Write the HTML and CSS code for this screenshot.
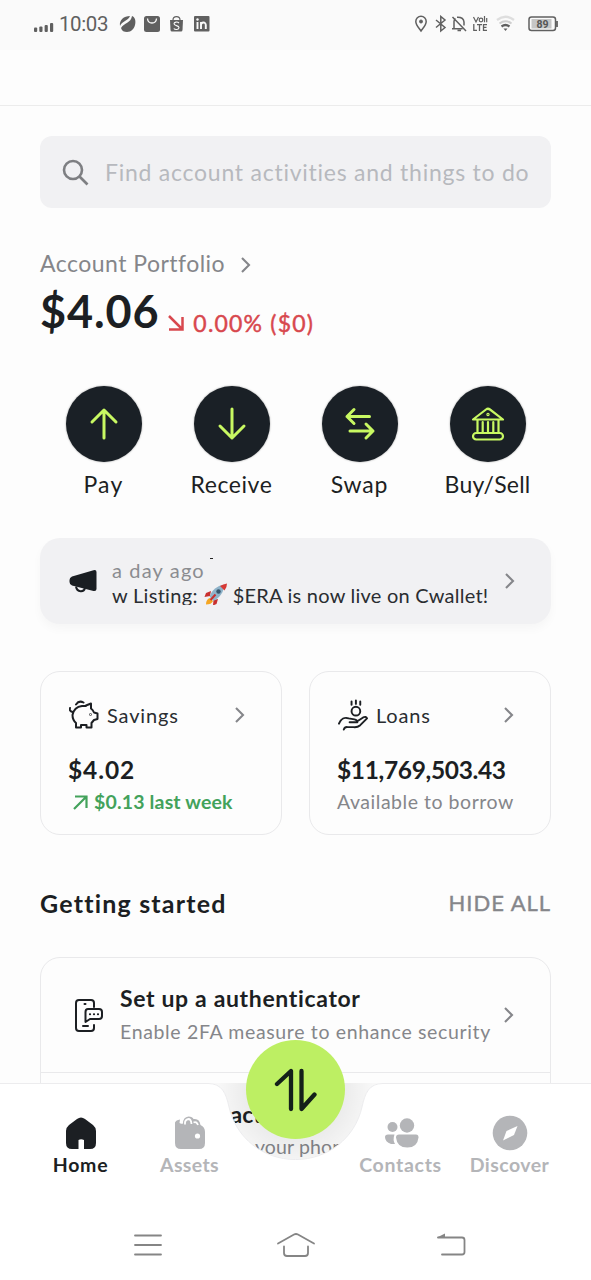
FILE: index.html
```html
<!DOCTYPE html>
<html lang="en">
<head>
<meta charset="utf-8">
<title>Wallet</title>
<link rel="stylesheet" href="styles.css">
</head>
<body>
<div class="phone">
  <header class="status">
    <svg class="status-left" width="20" height="12" viewBox="0 0 20 12" fill="#606060"><rect x="0" y="7.500" width="3.200" height="4.500" rx="1"/><rect x="5.300" y="6.500" width="3.200" height="5.500" rx="1"/><rect x="10.600" y="5" width="3.200" height="7" rx="1"/><rect x="16" y="3" width="3.200" height="9" rx="1"/></svg>
    <span class="clock">10:03</span>
    <svg class="apps" width="92" height="18" viewBox="0 0 92 18" fill="#606060">
      <path d="M1 11C0 5 5 1 11 1C9 6 3 6 1 11ZM2 13C5 8 12 8 13 1C19 3 17 17 8 17C5 17 3 16 2 13Z"/>
      <rect x="25" y="1" width="16" height="16" rx="2.500"/><path d="M28.500 3.500C29 9.500 37 9.500 37.500 3.500" fill="none" stroke="#fafafa" stroke-width="1.300"/>
      <path d="M51 5H64L63.500 15Q63.400 16.500 62 16.500H53Q51.600 16.500 51.500 15Z"/><path d="M54 5C54 .5 61 .5 61 5" fill="none" stroke="#606060" stroke-width="1.200"/><path d="M60 8C58.500 6.500 55 6.800 55 8.800C55 11 60 10.300 60 12.600C60 15 56 15 54.800 13.500" fill="none" stroke="#fafafa" stroke-width="1.100"/>
      <rect x="75" y="1" width="15.500" height="15.500" rx="1"/><path d="M78.500 7V14M82 14V7M82 10C82 7 86.800 6.500 86.800 10V14" fill="none" stroke="#fafafa" stroke-width="1.900"/><circle cx="78.500" cy="4.500" r="1.200" fill="#fafafa"/>
    </svg>
    <svg class="status-right" width="146" height="18" viewBox="0 0 146 18" fill="none" stroke="#606060" stroke-width="1.500">
      <path d="M7 16C4.500 12.500 1.800 10 1.800 6.500A5.200 5.200 0 0 1 12.200 6.500C12.200 10 9.500 12.500 7 16Z"/><circle cx="7" cy="6.500" r="1.500" fill="#606060" stroke-width="1"/>
      <path d="M22 5L31 12.500L26.800 16V1.500L31 5L22 12.500"/>
      <path d="M38.500 2L52 16M38 13.700H48.500M40 13.500V6.500Q40 4.500 41.500 3.500M43 2.300Q49.500 2 50 7V10.500M43.500 15.500H47"/>
      <path d="M59.500 2L62 7L64.500 2M70.500 1V7.300M72.700 3V7.300" stroke-width="1.200"/><circle cx="67" cy="5" r="1.800" stroke-width="1.200"/>
      <path d="M59.800 9V15.300H63M63 9.600H68M65.500 9.600V16M73 9.600H69.500V15.300H73M69.500 12.400H72.500" stroke-width="1.300"/>
      <path d="M83 5Q91.500-1.500 100 5" stroke="#dedede" stroke-width="2.400"/><path d="M85.500 8.500Q91.500 4 97.500 8.500" stroke="#cfcfcf" stroke-width="2"/><path d="M87.500 11.500Q91.500 8.500 95.500 11.500" stroke-width="2.200"/><path d="M89.500 13.500H93.500L91.500 16Z" fill="#606060" stroke="none"/>
      <rect x="115" y="2" width="26.500" height="13.500" rx="2.500"/><path d="M143 6V12" stroke-width="1.800"/><rect x="117.500" y="4" width="20" height="9.500" fill="#c6c6c6" stroke="none"/>
      <text x="128.500" y="12.800" text-anchor="middle" class="battery">89</text>
    </svg>
  </header>
  <div class="topbar"></div>
  <main class="content">
    <div class="search">
      <svg width="28" height="28" viewBox="0 0 28 28" fill="none" stroke="#7e7f82" stroke-width="2.600"><circle cx="11" cy="12" r="9"/><path d="M17.500 18.500L25.500 26.500"/></svg>
      <span class="search-hint">Find account activities and things to do</span>
    </div>
    <section class="portfolio">
      <div class="portfolio-title"><span class="t-port">Account Portfolio</span><svg class="chev" width="11" height="18" viewBox="0 0 11 18"><path d="M2 2L9 9L2 16"/></svg></div>
      <div class="balance">
        <strong class="t-total">$4.06</strong>
        <svg class="down" width="18" height="18" viewBox="0 0 18 18" fill="none" stroke="#d8484e" stroke-width="2.500"><path d="M2 2L15 15M2 15.500H15.500V3"/></svg>
        <span class="t-delta">0.00% ($0)</span>
      </div>
    </section>
    <section class="actions">
      <div class="action"><span class="disc"><svg width="40" height="40" viewBox="0 0 40 40"><path d="M20 34V6M8 18L20 6L32 18"/></svg></span><span class="t-pay">Pay</span></div>
      <div class="action"><span class="disc"><svg width="40" height="40" viewBox="0 0 40 40"><path d="M20 5V34M8 22L20 34L32 22"/></svg></span><span class="t-receive">Receive</span></div>
      <div class="action"><span class="disc"><svg width="40" height="40" viewBox="0 0 40 40"><path d="M29.500 12.500H7M14 5.500L7 12.500L14 19.500M10 27H33M26 20L33 27L26 34"/></svg></span><span class="t-swap">Swap</span></div>
      <div class="action"><span class="disc"><svg class="bank" width="40" height="40" viewBox="0 0 40 40"><path d="M5 15.500L18 5.500Q20 4 22 5.500L35 15.500ZM9.500 16V28M14.700 18V28M20 18V28M25.300 18V28M30.500 16V28"/><rect x="5" y="29" width="30" height="6.500" rx="3.200"/><circle cx="20" cy="10.500" r=".6"/></svg></span><span class="t-buy">Buy/Sell</span></div>
    </section>
    <section class="notice">
      <svg class="horn" width="28" height="24" viewBox="0 0 28 24"><path d="M24.500 1.200Q27.500.5 27.500 3V20Q27.500 22.500 24.500 22L3 16.500Q.5 15.500.5 13V11Q.5 8.500 3 7.500Z" fill="#1a1e22"/><path d="M7 17.500C8 23.500 15 23.500 16 19" fill="none" stroke="#1a1e22" stroke-width="2"/></svg>
      <div class="notice-text">
        <i class="speck"></i>
        <span class="t-ago">a day ago</span>
        <span class="notice-line"><span class="t-list">w Listing:</span><svg class="rocket" width="24" height="23" viewBox="0 0 24 23"><path d="M7 8L2 10L.5 14L6 13Z" fill="#c9302f"/><path d="M14 16L12.500 21L9 22.500L9.500 17Z" fill="#c9302f"/><path d="M2 21.500Q2 16 6 15L9 18Q7.500 21.500 2 21.500Z" fill="#f5a623"/><path d="M5.500 13.500C8 7 13 2.500 20 2C20 9 16 14.500 9.500 18Z" fill="#8fb3c9"/><path d="M16 3Q19 1 23 .5Q23 4.500 20.500 7.500Z" fill="#d63a36"/><circle cx="14.500" cy="8.500" r="2.200" fill="#37566d"/><path d="M6.500 17L11.500 11.500" stroke="#c9302f" stroke-width="2"/></svg><span class="t-era">$ERA is now live on Cwallet!</span></span>
      </div>
      <svg class="chev" width="11" height="18" viewBox="0 0 11 18"><path d="M2 2L9 9L2 16"/></svg>
    </section>
    <section class="cards">
      <article class="card">
        <div class="card-head">
          <svg class="line-icon" width="30" height="30" viewBox="0 0 30 30"><path d="M17 5.500L22 3.500V8.500Q24 10 25 12.500L28.500 13.500V19L25 20L22.500 23V27.500H17.500V25H12V27.500H7V23Q3.500 20 3.500 15Q5 7 13 6H17M1 8Q0 11 3.500 12M7 4.500Q10 0 14.500 2.500"/><circle cx="21.500" cy="14.500" r=".3"/></svg>
          <span class="t-savings">Savings</span><svg class="chev" width="11" height="18" viewBox="0 0 11 18"><path d="M2 2L9 9L2 16"/></svg>
        </div>
        <strong class="amount t-402">$4.02</strong>
        <div class="gain"><svg width="15" height="15" viewBox="0 0 15 15" fill="none" stroke="#43a25b" stroke-width="2.200"><path d="M1 14L13 2M2 1.500H13.500V13"/></svg><span class="t-week">$0.13 last week</span></div>
      </article>
      <article class="card">
        <div class="card-head">
          <svg class="line-icon" width="30" height="33" viewBox="0 0 31 33"><circle cx="18.500" cy="12" r="4.500"/><path d="M14 2V5.500M18.500 1V4.500M23 2V5.500M1 25C3 20 7 18 11 19.500L17 20.500Q20 21 20 23.500H12M20 22.500L26 18.500Q29 17 30 19.500L23 26.500Q20 29 16 28.500H10Q7 28 6 31"/></svg>
          <span class="t-loans">Loans</span><svg class="chev" width="11" height="18" viewBox="0 0 11 18"><path d="M2 2L9 9L2 16"/></svg>
        </div>
        <strong class="amount t-11m">$11,769,503.43</strong>
        <span class="t-avail">Available to borrow</span>
      </article>
    </section>
    <div class="section-head"><h2 class="t-getting">Getting started</h2><span class="t-hide">HIDE ALL</span></div>
    <section class="tasks">
      <div class="task">
        <svg class="line-icon" width="30" height="34" viewBox="0 0 30 34"><path d="M20 9V5Q20 2 17 2H5Q2 2 2 5V30Q2 33 5 33H17Q20 33 20 30V27M10.500 6H11.500M9 28H14"/><path d="M14 11H25Q28 11 28 14V18Q28 21 25 21H16L11.500 24V14Q11.500 11 14 11ZM15.900 16.300H16.100M19.900 16.300H20.100M23.900 16.300H24.100"/></svg>
        <div class="task-text"><strong class="t-auth">Set up a authenticator</strong><span class="t-2fa">Enable 2FA measure to enhance security</span></div>
        <svg class="chev" width="11" height="18" viewBox="0 0 11 18"><path d="M2 2L9 9L2 16"/></svg>
      </div>
      <div class="task">
        <span class="task-blank"></span>
        <div class="task-text tight"><strong>Invite contacts</strong><span>Find friends on your phone</span></div>
      </div>
    </section>
  </main>
  <nav class="dock">
    <svg class="dock-shape" width="591" height="197" viewBox="0 0 591 197"><defs><radialGradient id="halo" gradientUnits="userSpaceOnUse" cx="295.500" cy="8" r="78"><stop offset=".62" stop-color="#000" stop-opacity=".07"/><stop offset="1" stop-color="#000" stop-opacity=".02"/></radialGradient></defs><path d="M208 0C222 0 226 10 229 24C236 55 263 76 295.500 76C328 76 355 55 362 24C365 10 369 0 383 0Z" fill="url(#halo)"/><path d="M0 .5H208C222 .5 226 10 229 24C236 55 263 76.500 295.500 76.500C328 76.500 355 55 362 24C365 10 369 .5 383 .5H591V197H0Z" fill="#fff"/><path d="M0 .5H208C222 .5 226 10 229 24C236 55 263 76.500 295.500 76.500C328 76.500 355 55 362 24C365 10 369 .5 383 .5H591" fill="none" stroke="#ececee"/></svg>
    <span class="fab"><svg width="44" height="44" viewBox="0 0 44 44"><path d="M3 16L17 3V41M27.500 3V41L40.500 26.500"/></svg></span>
    <div class="tabs">
      <div class="tab active"><svg width="36" height="36" viewBox="0 0 36 36"><path d="M14 4Q18 1 22 4L30 10Q33 12.500 33 16V28Q33 34 27 34H21V25Q18 23.500 15.500 25V34H9Q3 34 3 28V16Q3 12.500 6 10Z"/></svg><span class="t-home">Home</span></div>
      <div class="tab"><svg width="36" height="36" viewBox="0 0 36 36"><path d="M3 7.500Q4 5 8 4.500L7.500 8Q9 9.300 11 8.500Q11 2 16.500 1.500Q20.500 1.500 21.500 4Q27.500 3 28.500 10Q33 12 33 17V28Q33 34 27 34H9Q3 34 3 28Z"/><path d="M13 9.500Q12.500 4.500 16.500 4Q19 4 19.500 9M21.500 7.500Q24.500 6 26 10" fill="none" stroke="#fff" stroke-width="1.800"/><circle cx="25.500" cy="21" r="2.600" fill="#fff"/></svg><span class="t-assets">Assets</span></div>
      <span></span>
      <div class="tab"><svg width="36" height="36" viewBox="0 0 36 36"><circle cx="9.500" cy="12" r="5"/><circle cx="24" cy="10.500" r="7.200"/><path d="M11.500 19.500Q9.500 25 12 29H8Q2 27 2 22Q2 19.500 5 19.500Z"/><path d="M16 19.500H33Q35.500 19.500 35.500 22.500Q34.500 32.500 24.300 32.500Q14 32.500 13 22.500Q13 19.500 16 19.500Z"/></svg><span class="t-contacts">Contacts</span></div>
      <div class="tab"><svg width="36" height="36" viewBox="0 0 36 36"><circle cx="18" cy="18" r="17.300"/><path d="M25.500 11L22 20L11 25.500L14.500 16Z" fill="#fff"/></svg><span class="t-discover">Discover</span></div>
    </div>
    <div class="system">
      <svg width="28" height="24" viewBox="0 0 28 24"><path d="M1 2.500H27M1 12H27M1 21.500H27"/></svg>
      <svg class="sys-home" width="40" height="28" viewBox="0 0 40 28"><path d="M2 12.500L18 3.500Q20 2.500 22 3.500L38 12.500M8 15.500V22Q8 25 11 25H29Q32 25 32 22V15.500"/></svg>
      <svg width="30" height="26" viewBox="0 0 30 26"><path d="M2 5.500H26Q28.500 5.500 28.500 8V20Q28.500 22.500 26 22.500H6"/><path d="M1 5.500L9 1.500V5.500Z" fill="#858585" stroke="none"/></svg>
    </div>
  </nav>
</div>
</body>
</html>
```
FILE: styles.css
```css
* { box-sizing: border-box; }
body { margin: 0; background: #fdfdfd; font-family: Lato, "Noto Sans", sans-serif; color: #1c1f23; }
h2 { margin: 0; }
svg { display: block; flex: none; }
.phone { position: relative; width: 591px; height: 1280px; overflow: hidden; white-space: nowrap; }
.status { display: flex; align-items: center; height: 50px; padding: 0 31px 3px 34px; background: #fafafa; }
.status-left { margin-top: 4px; }
.clock { margin-left: 5px; font: 20.500px Roboto, sans-serif; letter-spacing: -.4px; color: #606060; }
.apps { margin-left: 11px; }
.status-right { margin-left: auto; }
.battery { font: bold 10.500px Roboto, sans-serif; fill: #555; stroke: none; }
.topbar { height: 56px; border-bottom: 1px solid #ececec; }
.content { padding: 30px 40px 0; }
.search { display: flex; align-items: center; gap: 15px; height: 72px; padding-left: 22px; border-radius: 12px; background: #f1f1f3; }
.search-hint { font-size: 23px; letter-spacing: .75px; color: #b7b9be; }
.chev { fill: none; stroke: #85868a; stroke-width: 2.100; }
.portfolio { margin-top: 41px; }
.portfolio-title { display: flex; align-items: center; gap: 15px; height: 31px; font-size: 23px; line-height: 29px; color: #85868a; }
.t-port { padding-bottom: 2px; letter-spacing: .47px; }
.balance { display: flex; align-items: flex-start; height: 64px; color: #d8484e; }
.t-total { font-size: 45px; line-height: 62px; letter-spacing: .85px; color: #1c1f23; font-weight: 700; }
.down { margin: 34px 0 0 8px; }
.t-delta { margin-left: 8px; font-size: 23px; line-height: 86px; letter-spacing: 1.200px; -webkit-text-stroke: .45px; }
.actions { display: grid; grid-template-columns: repeat(4, 128px); margin-top: 42px; }
.action { display: flex; flex-direction: column; align-items: center; gap: 8px; font-size: 23px; line-height: 29px; }
.actions { margin-left: -.5px; margin-right: -.5px; }
.t-pay { letter-spacing: 1.200px; }
.t-receive { letter-spacing: .55px; }
.t-swap { letter-spacing: .850px; }
.t-buy { letter-spacing: .2px; }
.disc { display: grid; place-items: center; width: 76px; height: 76px; border-radius: 50%; background: #1a2026; box-shadow: 0 0 2px #0006; }
.disc svg { fill: none; stroke: #c8f862; stroke-width: 3; stroke-linecap: round; stroke-linejoin: round; }
.disc .bank { stroke-width: 2.200; }
.notice { display: flex; align-items: center; height: 86px; margin-top: 39px; padding: 0 36px 0 29px; border-radius: 20px; background: #f1f1f3; box-shadow: 0 5px 10px #00000008; }
.notice-text { position: relative; display: flex; flex-direction: column; width: 380px; margin-left: 15px; font-size: 20px; line-height: 24px; }
.notice .chev { margin-left: auto; }
.speck { position: absolute; left: 98px; top: 0; width: 3px; height: 1px; background: #222; }
.t-ago { padding-bottom: 1px; letter-spacing: 1.150px; color: #8b8c90; }
.notice-line { display: flex; height: 22px; overflow: hidden; color: #2a2d31; }
.t-list { letter-spacing: .3px; }
.t-era { letter-spacing: .24px; }
.rocket { margin: 0 5px 0 6px; }
.cards { display: grid; grid-template-columns: 242px 242px; justify-content: space-between; margin-top: 47px; }
.card { display: flex; flex-direction: column; align-items: flex-start; height: 164px; padding: 26px 27px 0; border: 1px solid #e9e9eb; border-radius: 20px; font-size: 19.500px; color: #85868a; }
.card-head { display: flex; flex: none; align-items: center; gap: 8px; width: 100%; height: 34px; padding: 0 9px 0 1px; font-size: 20px; color: #2a2d31; }
.card-head .chev { margin-left: auto; }
.t-savings { letter-spacing: .85px; }
.t-loans { letter-spacing: .8px; }
.line-icon { fill: none; stroke: #1c1f23; stroke-width: 2; stroke-linecap: round; stroke-linejoin: round; }
.amount { margin-top: 21px; font-size: 24.500px; line-height: 34px; color: #1c1f23; font-weight: 700; }
.t-402 { letter-spacing: .9px; }
.t-11m { letter-spacing: -.35px; }
.gain { display: flex; align-items: center; gap: 6px; padding-left: 5px; color: #43a25b; font-weight: 700; line-height: 30px; }
.t-week { letter-spacing: .16px; }
.t-avail { line-height: 30px; letter-spacing: .53px; }
.section-head { display: flex; align-items: center; justify-content: space-between; height: 36px; margin-top: 50px; }
.t-getting { font-size: 25px; letter-spacing: 1.200px; font-weight: 700; }
.t-hide { padding-bottom: 1px; font-size: 22px; letter-spacing: .95px; -webkit-text-stroke: .4px; color: #85868a; }
.tasks { margin-top: 36px; border: 1px solid #e9e9eb; border-radius: 20px 20px 0 0; }
.task { display: flex; align-items: center; height: 115px; padding: 0 36px 0 33px; border-bottom: 1px solid #e9e9eb; }
.task-blank { width: 30px; }
.task-text { display: flex; flex-direction: column; align-items: flex-start; margin-left: 16px; gap: 3px; font-size: 19.500px; line-height: 30px; color: #85868a; }
.task .chev { margin-left: auto; }
.task-text strong { font-size: 23px; color: #1c1f23; }
.t-auth { letter-spacing: .65px; }
.t-2fa { padding-top: 1px; letter-spacing: .65px; }
.tight { letter-spacing: .12px; }
.dock { position: absolute; left: 0; bottom: 0; width: 591px; height: 197px; }
.dock-shape { position: absolute; inset: 0; }
.fab { position: absolute; left: 246px; top: -43px; display: grid; place-items: center; width: 99px; height: 99px; border-radius: 50%; background: #bdef63; }
.fab svg { fill: none; stroke: #14201a; stroke-width: 4.300; stroke-linecap: round; stroke-linejoin: round; }
.tabs { position: relative; display: grid; grid-template-columns: 109px 109px 102px 109px 109px; padding: 32px 0 0 26px; }
.tab { display: flex; flex-direction: column; align-items: center; font-size: 19.500px; font-weight: 700; line-height: 27px; color: #b4b5b8; fill: #b4b5b8; }
.active { color: #1c1f23; fill: #1c1f23; }
.t-home { letter-spacing: .75px; }
.t-assets { letter-spacing: .35px; }
.t-contacts { letter-spacing: .7px; }
.t-discover { letter-spacing: .45px; }
.system { position: relative; display: flex; align-items: center; justify-content: space-between; margin-top: 53px; padding: 0 125px 0 134px; }
.system svg { fill: none; stroke: #858585; stroke-width: 1.800; stroke-linecap: round; }
.system .sys-home { margin-right: 6px; }
```
